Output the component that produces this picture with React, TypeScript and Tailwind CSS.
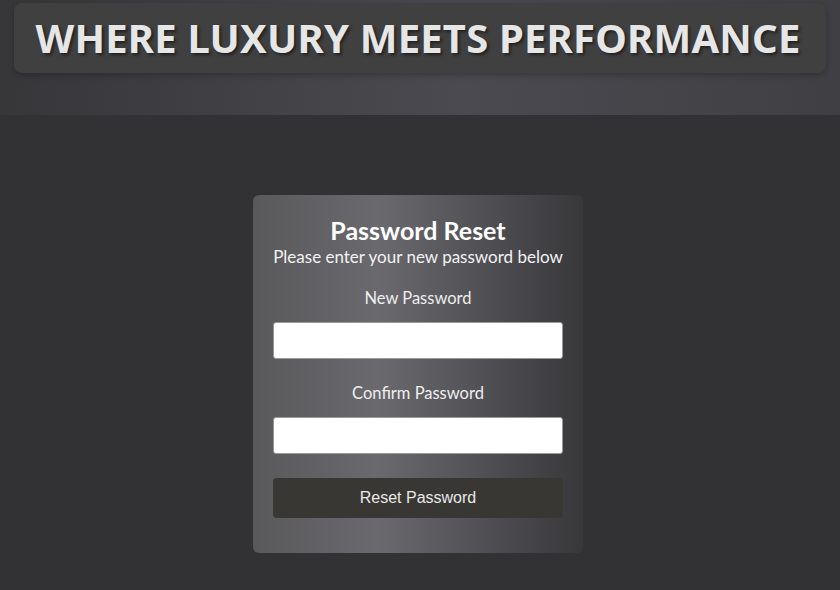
export default function App() {
  return (
    <div className="min-h-[590px] w-full bg-[#323234] font-['Lato',sans-serif]">
      {/* Header band */}
      <header className="h-[115px] bg-[linear-gradient(to_right,#37373a,#4a4a50_55%,#3f3f44)] px-[14px] pt-[3px]">
        <div className="flex h-[70px] items-center justify-center rounded-lg bg-[#404040] pr-[4px] shadow-[0_2px_6px_rgba(0,0,0,0.25)]">
          <h1 className="font-['Noto_Sans',sans-serif] text-[40px] leading-none font-bold tracking-[0.2px] text-[#e6e6e6] [text-shadow:2px_2px_3px_rgba(0,0,0,0.5)]">
            WHERE LUXURY MEETS PERFORMANCE
          </h1>
        </div>
      </header>

      <main className="flex justify-center pt-[80px] pr-[4px]">
        <form className="flex w-[330px] flex-col items-center rounded-md bg-[linear-gradient(to_right,#59595b,#6a696e_38%,#38383b)] px-5 pt-5 pb-[35px] text-white">
          <h2 className="text-[25px] leading-[30px] font-bold">Password Reset</h2>
          <p className="mt-[2px] text-[17px] leading-5 whitespace-nowrap text-[#f2f2f2]">Please enter your new password below</p>

          <label className="mt-[21px] text-[16.5px] leading-5 text-[#eeeeee]">New Password</label>
          <input type="password" className="mt-[14px] h-[37px] w-full rounded-[3px] border border-[#9a9a9a] bg-white" />

          <label className="mt-[24px] text-[16.5px] leading-5 text-[#eeeeee]">Confirm Password</label>
          <input type="password" className="mt-[14px] h-[37px] w-full rounded-[3px] border border-[#9a9a9a] bg-white" />

          <button
            type="button"
            className="mt-[24px] h-[40px] w-full rounded-[4px] bg-[#393734] font-['Liberation_Sans',sans-serif] text-[16px] text-[#e8e8e8]"
          >
            Reset Password
          </button>
        </form>
      </main>
    </div>
  )
}
